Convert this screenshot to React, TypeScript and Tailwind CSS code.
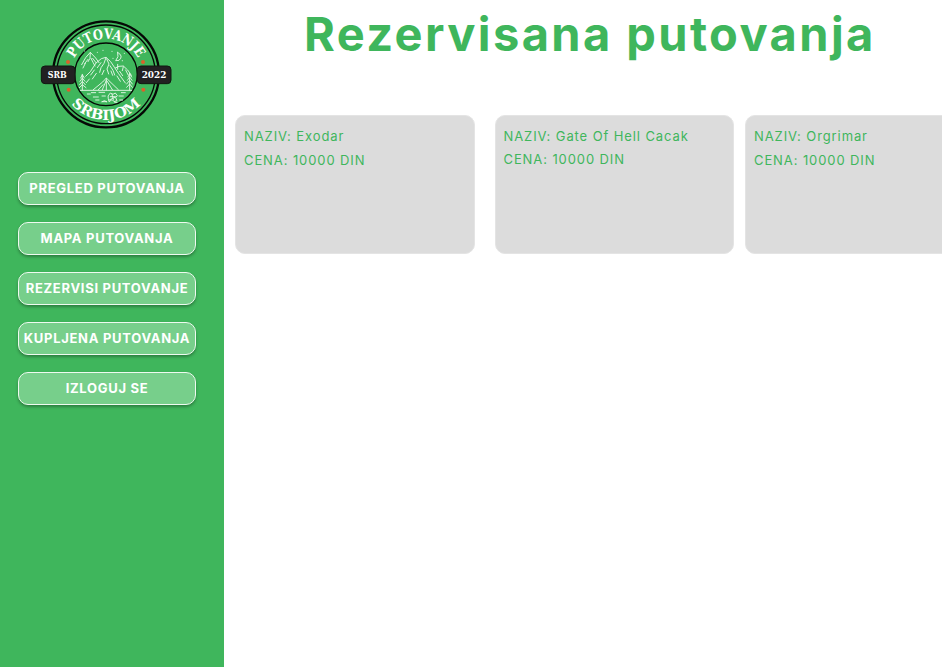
import React from "react";

const menu = [
  { label: "PREGLED PUTOVANJA", spacing: "tracking-[0.7px]" },
  { label: "MAPA PUTOVANJA", spacing: "tracking-[0.7px]" },
  { label: "REZERVISI PUTOVANJE", spacing: "tracking-[0.7px]" },
  { label: "KUPLJENA PUTOVANJA", spacing: "tracking-[0.7px]" },
  { label: "IZLOGUJ SE", spacing: "tracking-[0.7px]" },
];

const trips = [
  { name: "Exodar", price: "10000 DIN", place: "", gap: "mt-[1px]" },
  { name: "Gate Of Hell Cacak", price: "10000 DIN", place: "ml-5", gap: "" },
  { name: "Orgrimar", price: "10000 DIN", place: "ml-[11px]", gap: "mt-[1px]" },
];

function Logo() {
  return (
    <svg viewBox="0 0 450 390" className="ml-[30px] mt-[10px] block h-[130px] w-[150px] shrink-0">
      <defs>
        <path id="arcTop" d="M121 193 A107 107 0 0 1 335 193" />
        <path id="arcBottom" d="M91 193 A137 137 0 0 0 365 193" />
      </defs>
      <circle cx="228" cy="193" r="159" fill="none" stroke="#050805" strokeWidth="7" />
      <circle cx="228" cy="193" r="148" fill="none" stroke="#050805" strokeWidth="4" />
      <circle cx="228" cy="193" r="94" fill="none" stroke="#050805" strokeWidth="4" />
      <g fill="#fff" fontFamily="'DejaVu Serif', serif" fontWeight="700" fontSize="42" textAnchor="middle">
        <text>
          <textPath href="#arcTop" startOffset="50%" textLength="236" lengthAdjust="spacingAndGlyphs">PUTOVANJE</textPath>
        </text>
        <text>
          <textPath href="#arcBottom" startOffset="50%" textLength="236" lengthAdjust="spacingAndGlyphs">SRBIJOM</textPath>
        </text>
      </g>
      <g fill="#d9622b">
        <circle cx="114" cy="156" r="6" />
        <circle cx="339" cy="156" r="6" />
        <circle cx="116" cy="239" r="6" />
        <circle cx="340" cy="239" r="6" />
      </g>
      <g fill="none" stroke="#e4f6e7" strokeWidth="2.8" strokeLinecap="round" strokeLinejoin="round">
        <path d="M155 164 L167 143 L181 127 L197 144 L207 158" />
        <path d="M181 128 L180 145 L174 155 M174 148 L164 161 M183 145 L189 157 L195 168 M188 145 L198 158 M166 160 L159 174" />
        <path d="M167 199 L181 185 L198 159 L214 146 L228 142 L242 155 L254 173 L265 190 L286 219" />
        <path d="M228 143 L222 160 L213 173 L209 187 M230 147 L237 162 L231 177 L236 192 M213 158 L202 173 M222 181 L216 194 M240 167 L249 181 L254 195 M193 180 L182 195 M199 190 L187 207 M178 207 L169 218 M261 198 L271 214 M243 183 L248 196" />
        <path d="M256 174 L267 169 L280 168 L293 180 L304 196 M263 163 V178 M280 170 L277 182 M287 180 L294 194 M269 184 L278 197" />
        <path d="M151 241 H305 M190 239 L218 216 L229 204 L243 218 L265 239 M229 205 V240 M229 211 L217 239 M231 213 L247 239 M219 224 L205 239" />
        <path d="M157 193 V240 M152 204 L157 194 L163 204 M150 214 L157 204 L165 214 M149 224 L157 214 L166 224 M148 233 L157 224 L168 233" />
        <path d="M299 190 V240 M294 201 L299 191 L305 201 M292 211 L299 201 L306 211 M290 222 L299 211 L307 222 M290 232 L299 222 L307 232" />
        <path d="M263 127 Q282 138 267 151 L257 152 Q268 141 263 127" />
        <path d="M184 248 H197 M207 247 H224 M172 252 H181 M274 248 H286 M190 261 H205 M216 258 H226 M267 258 H280 M197 270 H207 M216 275 Q224 268 230 275 M216 275 H230 M254 277 H261 M269 270 H278" />
        <path d="M235 257 L241 249 L249 253 L256 249 L262 257 L257 263 L261 272 L252 275 L246 269 L237 275 L235 266 Z M241 260 H255 M246 252 L250 270 M238 270 L258 260" />
      </g>
      <g fill="#d8f4dd">
        <circle cx="164" cy="123" r="1.7" />
        <circle cx="202" cy="127" r="1.7" />
        <circle cx="219" cy="121" r="1.7" />
        <circle cx="246" cy="124" r="1.7" />
        <circle cx="283" cy="130" r="1.7" />
        <circle cx="277" cy="152" r="1.7" />
        <circle cx="249" cy="145" r="1.7" />
      </g>
      <rect x="34" y="168" width="101" height="53" rx="11" fill="#222122" stroke="#101810" strokeWidth="3" />
      <rect x="322" y="168" width="101" height="53" rx="11" fill="#222122" stroke="#101810" strokeWidth="3" />
      <g fill="#fff" fontFamily="'DejaVu Serif', serif" fontWeight="700" fontSize="28">
        <text x="53" y="205" textLength="57" lengthAdjust="spacingAndGlyphs">SRB</text>
        <text x="335" y="205" textLength="74" lengthAdjust="spacingAndGlyphs">2022</text>
      </g>
    </svg>
  );
}

export default function App() {
  return (
    <div className="flex h-[667px] w-[942px] overflow-hidden bg-white font-['Inter',sans-serif]">
      <aside className="flex w-56 shrink-0 flex-col bg-[#3fb65c]">
        <Logo />
        <nav className="ml-[18px] mt-8 flex flex-col gap-[17px]">
          {menu.map((item) => (
            <button
              key={item.label}
              className={`flex h-[33px] w-[178px] items-center justify-center whitespace-nowrap rounded-[10px] border-[1.5px] border-[#eefaf0] bg-[#77cf8b] text-[13px] font-bold text-white shadow-[0_2px_3px_rgba(0,0,0,0.3)] ${item.spacing}`}
            >
              {item.label}
            </button>
          ))}
        </nav>
      </aside>
      <main className="flex min-w-0 flex-1 flex-col">
        <h1 className="ml-20 mt-1 whitespace-nowrap text-[47px] font-bold leading-[60px] tracking-[2.4px] text-[#3fb65c]">
          Rezervisana putovanja
        </h1>
        <section className="ml-[11px] mt-[51px] flex">
          {trips.map((trip) => (
            <article
              key={trip.name}
              className={`h-[139px] w-[239.5px] shrink-0 rounded-[10px] border border-[#e4e4e4] bg-[#dcdcdc] px-2 pt-[9px] text-[13px] leading-[23px] tracking-[0.9px] text-[#3fb65c] ${trip.place}`}
            >
              <p>NAZIV: {trip.name}</p>
              <p className={trip.gap}>CENA: {trip.price}</p>
            </article>
          ))}
        </section>
      </main>
    </div>
  );
}
